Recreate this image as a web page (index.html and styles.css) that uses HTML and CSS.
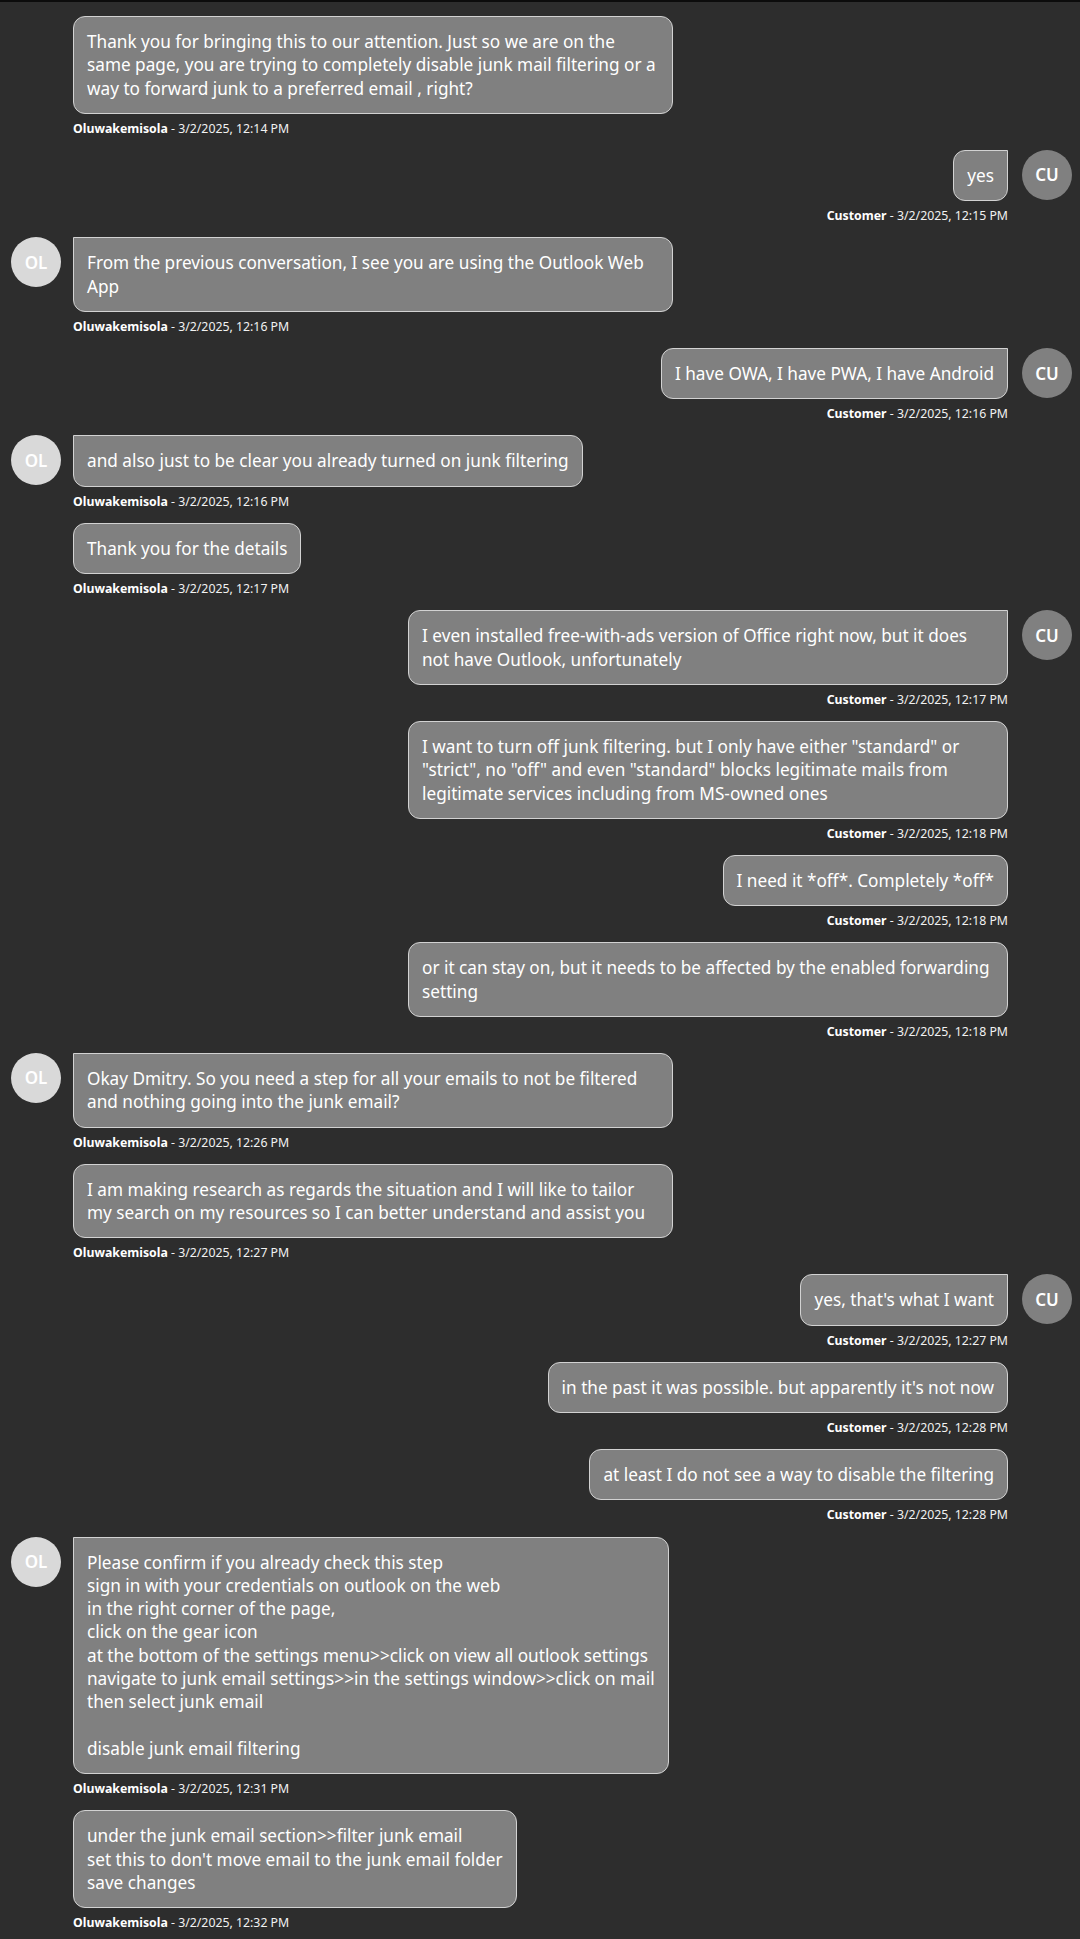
FILE: index.html
```html
<!DOCTYPE html>
<html lang="en">
<head>
  <meta charset="UTF-8">
  <meta name="viewport" content="width=device-width, initial-scale=1.0">
  <title>Chat Transcript</title>
  <link rel="stylesheet" href="styles.css">
</head>
<body>
  <div class="chat">

    <div class="msg agent">
      <div class="avatar empty"></div>
      <div class="content">
        <div class="bubble wide">Thank you for bringing this to our attention. Just so we are on the
same page, you are trying to completely disable junk mail filtering or a
way to forward junk to a preferred email , right?</div>
        <div class="meta"><b>Oluwakemisola</b> - 3/2/2025, 12:14 PM</div>
      </div>
    </div>

    <div class="msg customer lead">
      <div class="avatar">CU</div>
      <div class="content">
        <div class="bubble">yes</div>
        <div class="meta"><b>Customer</b> - 3/2/2025, 12:15 PM</div>
      </div>
    </div>

    <div class="msg agent lead">
      <div class="avatar">OL</div>
      <div class="content">
        <div class="bubble wide">From the previous conversation, I see you are using the Outlook Web
App</div>
        <div class="meta"><b>Oluwakemisola</b> - 3/2/2025, 12:16 PM</div>
      </div>
    </div>

    <div class="msg customer lead">
      <div class="avatar">CU</div>
      <div class="content">
        <div class="bubble">I have OWA, I have PWA, I have Android</div>
        <div class="meta"><b>Customer</b> - 3/2/2025, 12:16 PM</div>
      </div>
    </div>

    <div class="msg agent lead">
      <div class="avatar">OL</div>
      <div class="content">
        <div class="bubble">and also just to be clear you already turned on junk filtering</div>
        <div class="meta"><b>Oluwakemisola</b> - 3/2/2025, 12:16 PM</div>
      </div>
    </div>

    <div class="msg agent">
      <div class="avatar empty"></div>
      <div class="content">
        <div class="bubble">Thank you for the details</div>
        <div class="meta"><b>Oluwakemisola</b> - 3/2/2025, 12:17 PM</div>
      </div>
    </div>

    <div class="msg customer lead">
      <div class="avatar">CU</div>
      <div class="content">
        <div class="bubble wide">I even installed free-with-ads version of Office right now, but it does
not have Outlook, unfortunately</div>
        <div class="meta"><b>Customer</b> - 3/2/2025, 12:17 PM</div>
      </div>
    </div>

    <div class="msg customer">
      <div class="avatar empty"></div>
      <div class="content">
        <div class="bubble wide">I want to turn off junk filtering. but I only have either "standard" or
"strict", no "off" and even "standard" blocks legitimate mails from
legitimate services including from MS-owned ones</div>
        <div class="meta"><b>Customer</b> - 3/2/2025, 12:18 PM</div>
      </div>
    </div>

    <div class="msg customer">
      <div class="avatar empty"></div>
      <div class="content">
        <div class="bubble">I need it *off*. Completely *off*</div>
        <div class="meta"><b>Customer</b> - 3/2/2025, 12:18 PM</div>
      </div>
    </div>

    <div class="msg customer">
      <div class="avatar empty"></div>
      <div class="content">
        <div class="bubble wide">or it can stay on, but it needs to be affected by the enabled forwarding
setting</div>
        <div class="meta"><b>Customer</b> - 3/2/2025, 12:18 PM</div>
      </div>
    </div>

    <div class="msg agent lead">
      <div class="avatar">OL</div>
      <div class="content">
        <div class="bubble wide">Okay Dmitry. So you need a step for all your emails to not be filtered
and nothing going into the junk email?</div>
        <div class="meta"><b>Oluwakemisola</b> - 3/2/2025, 12:26 PM</div>
      </div>
    </div>

    <div class="msg agent">
      <div class="avatar empty"></div>
      <div class="content">
        <div class="bubble wide">I am making research as regards the situation and I will like to tailor
my search on my resources so I can better understand and assist you</div>
        <div class="meta"><b>Oluwakemisola</b> - 3/2/2025, 12:27 PM</div>
      </div>
    </div>

    <div class="msg customer lead">
      <div class="avatar">CU</div>
      <div class="content">
        <div class="bubble">yes, that's what I want</div>
        <div class="meta"><b>Customer</b> - 3/2/2025, 12:27 PM</div>
      </div>
    </div>

    <div class="msg customer">
      <div class="avatar empty"></div>
      <div class="content">
        <div class="bubble">in the past it was possible. but apparently it's not now</div>
        <div class="meta"><b>Customer</b> - 3/2/2025, 12:28 PM</div>
      </div>
    </div>

    <div class="msg customer">
      <div class="avatar empty"></div>
      <div class="content">
        <div class="bubble">at least I do not see a way to disable the filtering</div>
        <div class="meta"><b>Customer</b> - 3/2/2025, 12:28 PM</div>
      </div>
    </div>

    <div class="msg agent lead">
      <div class="avatar">OL</div>
      <div class="content">
        <div class="bubble">Please confirm if you already check this step
sign in with your credentials on outlook on the web
in the right corner of the page,
click on the gear icon
at the bottom of the settings menu&gt;&gt;click on view all outlook settings
navigate to junk email settings&gt;&gt;in the settings window&gt;&gt;click on mail
then select junk email

disable junk email filtering</div>
        <div class="meta"><b>Oluwakemisola</b> - 3/2/2025, 12:31 PM</div>
      </div>
    </div>

    <div class="msg agent">
      <div class="avatar empty"></div>
      <div class="content">
        <div class="bubble">under the junk email section&gt;&gt;filter junk email
set this to don't move email to the junk email folder
save changes</div>
        <div class="meta"><b>Oluwakemisola</b> - 3/2/2025, 12:32 PM</div>
      </div>
    </div>

  </div>
</body>
</html>
```

FILE: styles.css
```css
/* General Styles */
* {
  box-sizing: border-box;
}

html {
  background: #2d2d2d;
}

body {
  margin: 0;
  border-top: 2px solid #0c0c0c;
  background: #2d2d2d;
  font-family: "Noto Sans", "Open Sans", sans-serif;
  color: #fff;
}

.chat {
  display: flex;
  flex-direction: column;
  gap: 13.1px;
  padding: 14px 8px 10px 11px;
}

/* Message rows */
.msg {
  display: flex;
  align-items: flex-start;
  gap: 12px;
}

.msg.customer {
  flex-direction: row-reverse;
  gap: 14px;
}

.avatar {
  flex: 0 0 50px;
  height: 50px;
  border-radius: 50%;
  display: flex;
  align-items: center;
  justify-content: center;
  font-size: 17px;
  font-weight: 600;
  color: #fff;
}

.avatar.empty {
  visibility: hidden;
}

.agent .avatar {
  background: #d9d9d9;
}

.customer .avatar {
  background: #808080;
}

.content {
  display: flex;
  flex-direction: column;
  align-items: flex-start;
  max-width: 600px;
}

.customer .content {
  align-items: flex-end;
}

/* Bubbles */
.bubble {
  background: #808080;
  border: 1px solid #d2d2d2;
  border-radius: 12px;
  padding: 13px;
  font-size: 17.2px;
  line-height: 23.3px;
  white-space: pre-line;
}

.bubble.wide {
  width: 600px;
}

.agent.lead .bubble {
  border-top-left-radius: 0;
}

.customer.lead .bubble {
  border-top-right-radius: 0;
}

.meta {
  margin-top: 7px;
  font-size: 12.3px;
  line-height: 16px;
  color: #f2f2f2;
}

.meta b {
  color: #fff;
  font-weight: 700;
}
```
